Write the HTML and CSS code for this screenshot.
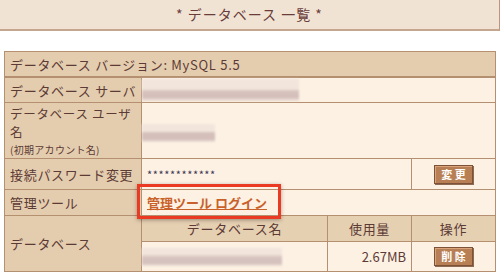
FILE: index.html
```html
<!DOCTYPE html>
<html lang="ja">
<head>
<meta charset="utf-8">
<link rel="stylesheet" href="styles.css">
</head>
<body>
<div class="page">
  <div class="title">* データベース 一覧 *</div>
  <table class="info">
    <colgroup>
      <col class="c-label"><col class="c-a"><col class="c-b"><col class="c-c">
    </colgroup>
    <tr class="r1">
      <td class="label" colspan="4">データベース バージョン: MySQL 5.5</td>
    </tr>
    <tr class="r2">
      <td class="label">データベース サーバ</td>
      <td class="data" colspan="3"><span class="blur blur-server"></span></td>
    </tr>
    <tr class="r3">
      <td class="label"><span class="line">データベース ユーザ</span><span class="line">名</span><span class="small">(初期アカウント名)</span></td>
      <td class="data" colspan="3"><span class="blur blur-user"></span></td>
    </tr>
    <tr class="r4">
      <td class="label">接続パスワード変更</td>
      <td class="data" colspan="2"><span class="stars">************</span></td>
      <td class="data center"><span class="btn">変 更</span></td>
    </tr>
    <tr class="r5">
      <td class="label">管理ツール</td>
      <td class="data" colspan="3"><a class="link" href="#">管理ツール ログイン</a></td>
    </tr>
    <tr class="r6">
      <td class="label" rowspan="2">データベース</td>
      <td class="head center">データベース名</td>
      <td class="head center">使用量</td>
      <td class="head center">操作</td>
    </tr>
    <tr class="r7">
      <td class="data"><span class="blur blur-db"></span></td>
      <td class="data right">2.67MB</td>
      <td class="data center"><span class="btn">削 除</span></td>
    </tr>
  </table>
  <div class="highlight"></div>
</div>
</body>
</html>
```

FILE: styles.css
```css
html, body {
  margin: 0;
  padding: 0;
  background: #ffffff;
}
body {
  font-family: "Noto Sans CJK JP", "Noto Sans", sans-serif;
  color: #5c3a35;
  font-size: 13px;
}
.page {
  position: relative;
  width: 500px;
  height: 275px;
  overflow: hidden;
}
.title {
  box-sizing: border-box;
  width: 500px;
  height: 31px;
  background: #f1e3d4;
  border-right: 1px solid #b8977c;
  border-bottom: 2px solid #c6a78d;
  text-align: center;
  font-size: 14px;
  letter-spacing: 1px;
  line-height: 29px;
  color: #6a3d3a;
}
.info {
  border-collapse: collapse;
  margin: 20px 0 0 4px;
  width: 491px;
  table-layout: fixed;
}
.c-label { width: 137px; }
.c-a { width: 186px; }
.c-b { width: 84px; }
.c-c { width: 84px; }
.info td {
  border: 1px solid #b48f70;
  padding: 0 5px;
  line-height: 15px;
  vertical-align: middle;
  white-space: nowrap;
}
.label {
  background: #e4cdae;
  letter-spacing: 0.7px;
}
.data {
  background: #fdf1e4;
}
.head {
  background: #e6d0b2;
  letter-spacing: 0.7px;
}
.center { text-align: center; }
.right { text-align: right; }
.r1 td { height: 24px; border-bottom: 2px solid #b48f70; }
.r2 td { height: 24px; }
.r3 td { height: 55px; }
.line {
  display: block;
  font-size: 12.5px;
  height: 18.5px;
  line-height: 18.5px;
}
.small {
  display: block;
  font-size: 10px;
  line-height: 15px;
  letter-spacing: 0.3px;
}
.r4 td { height: 30px; }
.r5 td { height: 25px; }
.r6 td { height: 25px; }
.r7 td { height: 29px; }
.stars {
  font-size: 11px;
  color: #3c3650;
  letter-spacing: 0.6px;
}
.btn {
  display: inline-block;
  box-sizing: border-box;
  width: 39px;
  height: 19px;
  background: #b97f54;
  border: 1px solid #7d5236;
  box-shadow: inset 1px 1px 0 #d9a47c, 1px 1px 0 #8f6a52;
  color: #ffffff;
  font-size: 11px;
  font-weight: bold;
  line-height: 17px;
  text-align: center;
  vertical-align: middle;
  letter-spacing: 0;
}
.link {
  color: #c8622a;
  text-decoration: underline;
  font-weight: bold;
}
.blur {
  display: block;
  margin-left: -5px;
  filter: blur(1.2px);
}
.blur-server {
  width: 157px;
  height: 22px;
  background:
    linear-gradient(to bottom, #f2e6dc 0, #f2e6dc 45%, #d9c4bf 55%, #d2bdb9 80%, #efe2d9 100%);
}
.blur-user {
  width: 73px;
  height: 18px;
  margin-top: 4px;
  background:
    linear-gradient(to bottom, #f2e6dc 0, #f2e6dc 40%, #d4bfba 50%, #d4bfba 85%, #f2e6dc 100%);
}
.blur-db {
  width: 140px;
  height: 18px;
  background:
    linear-gradient(to bottom, #f2e6dc 0, #f2e6dc 35%, #d8c4c0 50%, #d4c0bc 85%, #f2e6dc 100%);
}
.highlight {
  position: absolute;
  left: 137px;
  top: 184px;
  width: 138px;
  height: 29px;
  border: 3px solid #ea3a24;
  box-shadow: 0 1px 4px rgba(0, 0, 0, 0.35);
  pointer-events: none;
}
```
